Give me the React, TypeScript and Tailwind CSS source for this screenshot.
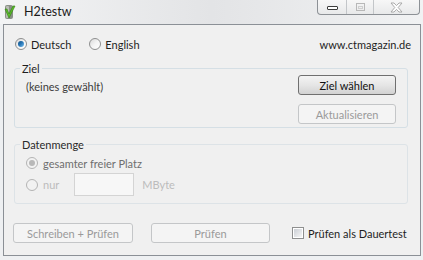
import React from "react";

/* ---------------------------------------------------------
 * Kleine Win7-Steuerelemente
 * --------------------------------------------------------- */
function Radio({ checked = false, disabled = false }: { checked?: boolean; disabled?: boolean }) {
  return (
    <span
      className={
        "w-[12px] h-[12px] shrink-0 rounded-full border flex items-center justify-center " +
        (disabled
          ? "border-[#b4b4b4] bg-[#f2f2f2]"
          : "border-[#8e8f8f] bg-gradient-to-br from-[#d9d9d9] via-[#f4f4f4] to-[#ffffff]")
      }
    >
      {checked && (
        <span
          className={
            "w-[6px] h-[6px] rounded-full " +
            (disabled
              ? "bg-[#b8b8b8]"
              : "bg-gradient-to-br from-[#0f4f85] via-[#2a79b8] to-[#7cc4f3]")
          }
        />
      )}
    </span>
  );
}

function Checkbox() {
  return (
    <span className="w-[12px] h-[12px] shrink-0 border border-[#8e8f8f] bg-white flex items-center justify-center">
      <span className="w-[8px] h-[8px] bg-gradient-to-br from-[#cbcfd5] to-[#f6f6f6]" />
    </span>
  );
}

type BtnProps = { label: string; disabled?: boolean; className?: string };

function Button({ label, disabled = false, className = "" }: BtnProps) {
  return (
    <div
      className={
        "h-[20px] rounded-[3px] border flex items-center justify-center " +
        (disabled
          ? "border-[#c4c6c8] bg-[#f4f4f4] text-[#9a9a9a] "
          : "border-[#707070] bg-gradient-to-b from-[#f4f4f4] via-[#e6e6e6] to-[#d2d2d2] text-[#111] ") +
        className
      }
    >
      {label}
    </div>
  );
}

/* ---------------------------------------------------------
 * Titelleiste mit App-Icon und Fensterknöpfen
 * --------------------------------------------------------- */
function TitleBar() {
  return (
    <div className="h-[24px] flex items-start bg-gradient-to-r from-[#f3f4f5] via-[#e3e4e6] to-[#f1f2f3]">
      <svg width="12" height="17" viewBox="0 0 12 17" className="ml-[4px] mt-[3px]">
        <rect x="1" y="2" width="8" height="14" rx="2" fill="#8a9087" />
        <rect x="2" y="3" width="3" height="12" rx="1" fill="#b9beb5" />
        <path d="M1 6 L5 15 L11 3 L9 3 L5 11 L3 6 Z" fill="#5cbf2a" stroke="#2f7d10" strokeWidth="0.6" />
      </svg>
      <span className="ml-[8px] mt-[4px] text-[12.5px] leading-[15px] text-[#1b1b1b]">H2testw</span>

      <div className="ml-auto mr-[3px] h-[15px] flex border border-t-0 border-[#8d9196] rounded-b-[4px] overflow-hidden bg-gradient-to-b from-[#f7f7f7] to-[#e8e9ea]">
        <div className="w-[29px] flex items-center justify-center border-r border-[#c3c6c9]">
          <span className="w-[11px] h-[4px] mt-[2px] rounded-[1px] border border-[#3c3c3c] bg-white" />
        </div>
        <div className="w-[27px] flex items-center justify-center border-r border-[#c3c6c9]">
          <span className="w-[9px] h-[8px] border border-[#b8b8b8] flex items-center justify-center">
            <span className="w-[5px] h-[3px] border border-[#cfcfcf]" />
          </span>
        </div>
        <div className="w-[45px] flex items-center justify-center">
          <svg width="13" height="11" viewBox="0 0 13 11">
            <polygon
              points="1,1 4,1 6.5,3.6 9,1 12,1 8.2,5.5 12,10 9,10 6.5,7.4 4,10 1,10 4.8,5.5"
              fill="#ffffff"
              stroke="#a3a3a3"
              strokeWidth="0.9"
            />
          </svg>
        </div>
      </div>
    </div>
  );
}

/* ---------------------------------------------------------
 * HAUPTFENSTER
 * --------------------------------------------------------- */
export default function App() {
  return (
    <div
      className="w-[423px] h-[260px] bg-[#eef0f2] text-[11px] leading-[13px] text-[#1e1e1e]"
      style={{ fontFamily: 'Lato, "Noto Sans", sans-serif' }}
    >
      <TitleBar />

      <div className="ml-[3px] w-[418px] h-[232px] border border-[#8b9096] bg-[#f0f0f0] flex flex-col">
        {/* Sprache + Link */}
        <div className="mt-[11px] h-[16px] flex items-center pl-[11px] pr-[9px]">
          <label className="flex items-center gap-[4px]">
            <Radio checked />
            <span>Deutsch</span>
          </label>
          <label className="flex items-center gap-[4px] ml-[18px]">
            <Radio />
            <span>English</span>
          </label>
          <span className="ml-auto">www.ctmagazin.de</span>
        </div>

        {/* Ziel */}
        <fieldset className="mt-[10px] ml-[10px] w-[394px] h-[66px] border border-[#d5dfe5] rounded-[3px]">
          <legend className="ml-[5px] px-[2px] leading-[13px]">Ziel</legend>
          <div className="flex justify-between">
            <span className="pl-[11px] pt-[5px] text-[#3c3c3c]">(keines gewählt)</span>
            <div className="flex flex-col gap-[9px] pr-[11px]">
              <Button label="Ziel wählen" className="w-[98px]" />
              <Button label="Aktualisieren" disabled className="w-[98px]" />
            </div>
          </div>
        </fieldset>

        {/* Datenmenge */}
        <fieldset className="mt-[10px] ml-[10px] w-[394px] h-[66px] border border-[#dde3e7] rounded-[3px]">
          <legend className="ml-[5px] px-[2px] leading-[13px] text-[#2a2a2a]">Datenmenge</legend>
          <div className="mt-[5px] h-[14px] pl-[11px] flex items-center gap-[5px] text-[#6e6e6e]">
            <Radio checked disabled />
            <span>gesamter freier Platz</span>
          </div>
          <div className="mt-[3px] h-[23px] pl-[11px] flex items-center text-[#bcbcbc]">
            <Radio disabled />
            <span className="ml-[5px]">nur</span>
            <span className="ml-[15px] w-[60px] h-[23px] border border-[#d4d4d4] bg-[#f7f7f7]" />
            <span className="ml-[8px]">MByte</span>
          </div>
        </fieldset>

        {/* Aktionen */}
        <div className="mt-[19px] pl-[9px] flex items-center">
          <Button label="Schreiben + Prüfen" disabled className="w-[120px]" />
          <Button label="Prüfen" disabled className="w-[119px] ml-[18px]" />
          <label className="ml-[22px] flex items-center gap-[4px]">
            <Checkbox />
            <span>Prüfen als Dauertest</span>
          </label>
        </div>
      </div>
    </div>
  );
}
